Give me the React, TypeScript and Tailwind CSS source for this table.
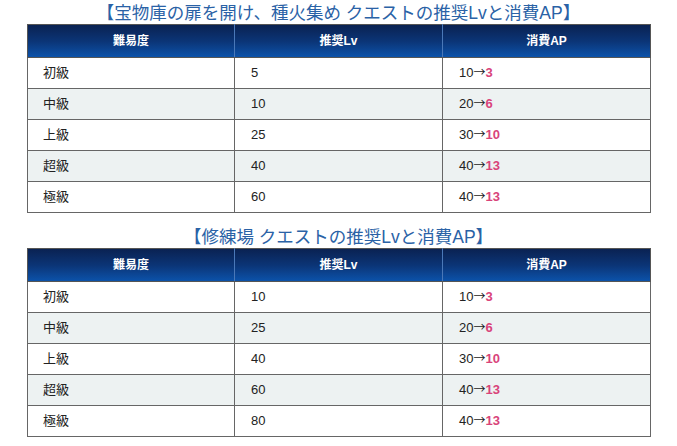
import React from 'react';

interface Row {
    level: string;
    lv: string;
    from: string;
    to: string;
}

interface QuestTable {
    title: string;
    rows: Row[];
}

const tables: QuestTable[] = [
    {
        title: '【宝物庫の扉を開け、種火集め クエストの推奨Lvと消費AP】',
        rows: [
            { level: '初級', lv: '5', from: '10', to: '3' },
            { level: '中級', lv: '10', from: '20', to: '6' },
            { level: '上級', lv: '25', from: '30', to: '10' },
            { level: '超級', lv: '40', from: '40', to: '13' },
            { level: '極級', lv: '60', from: '40', to: '13' },
        ],
    },
    {
        title: '【修練場 クエストの推奨Lvと消費AP】',
        rows: [
            { level: '初級', lv: '10', from: '10', to: '3' },
            { level: '中級', lv: '25', from: '20', to: '6' },
            { level: '上級', lv: '40', from: '30', to: '10' },
            { level: '超級', lv: '60', from: '40', to: '13' },
            { level: '極級', lv: '80', from: '40', to: '13' },
        ],
    },
];

const Section = ({ table, first }: { table: QuestTable; first: boolean }) => (
    <div className={first ? '' : 'mt-[13px]'}>
        <h3 className="h-[22px] text-center text-[17.5px] leading-[22px] text-[#2a62a6] font-normal">
            {table.title}
        </h3>
        <table className="w-[623px] ml-[27px] border-collapse table-fixed text-[13px] text-[#222]">
            <thead>
                <tr className="h-[33px] bg-gradient-to-b from-[#0a2252] via-[#0b3577] to-[#0b54ad] text-white text-[12px] font-bold">
                    <th className="w-[207px] border border-[#555] border-r-[#4a78b8] text-center font-bold">難易度</th>
                    <th className="w-[208px] border border-[#555] border-r-[#4a78b8] text-center font-bold">推奨Lv</th>
                    <th className="w-[208px] border border-[#555] text-center font-bold">消費AP</th>
                </tr>
            </thead>
            <tbody>
                {table.rows.map((r, i) => (
                    <tr key={i} className={`h-[31px] ${i % 2 === 1 ? 'bg-[#edf2f2]' : 'bg-white'}`}>
                        <td className="border border-[#666] pl-[15px]">{r.level}</td>
                        <td className="border border-[#666] pl-[16px]">{r.lv}</td>
                        <td className="border border-[#666] pl-[16px]">
                            {r.from}
                            <span className="font-['Noto_Sans_CJK_JP'] text-[12px]">→</span>
                            <span className="font-bold text-[#d9437a]">{r.to}</span>
                        </td>
                    </tr>
                ))}
            </tbody>
        </table>
    </div>
);

export default function App() {
    return (
        <div
            className="w-[677px] h-[446px] bg-white pt-[2px] overflow-hidden"
            style={{ fontFamily: '"Liberation Sans", "Noto Sans CJK JP", sans-serif' }}
        >
            {tables.map((t, i) => (
                <Section key={i} table={t} first={i === 0} />
            ))}
        </div>
    );
}
